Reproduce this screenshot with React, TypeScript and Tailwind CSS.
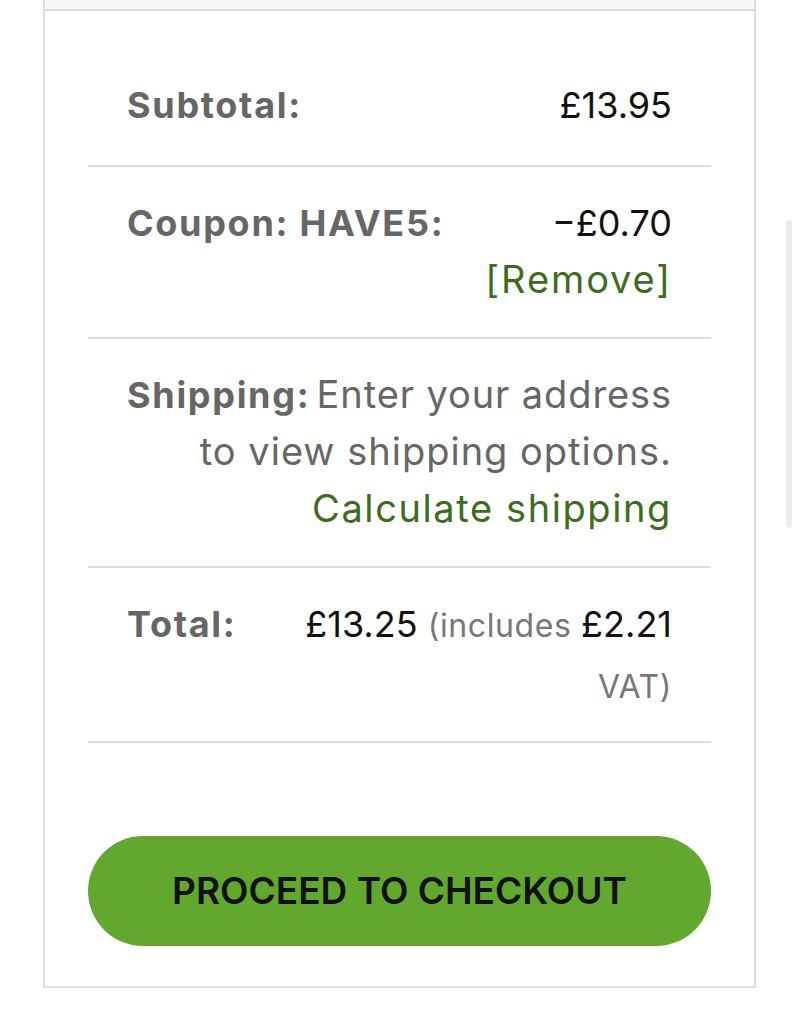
import React from "react";

function Row({ children, className = "" }: { children: React.ReactNode; className?: string }) {
  return (
    <div className={`border-b-2 border-[#dcdce2] px-[39px] text-right ${className}`}>
      {children}
    </div>
  );
}

function Label({ children }: { children: React.ReactNode }) {
  return (
    <span className="float-left text-[36px] font-bold tracking-[1.7px] text-[#666]">{children}</span>
  );
}

export default function App() {
  return (
    <div className="relative min-h-[1024px] bg-white font-['Inter',sans-serif] text-[36px] text-[#111]">
      <div className="ml-[43px] w-[713px] border-2 border-t-0 border-[#dcdce2]">
        <div className="h-[11px] border-b-2 border-[#dcdce2] bg-[#f8f8fb]" />
        <div className="px-[43px] pt-[38px]">
          <Row className="pb-[31px] pt-[28px] leading-[57px]">
            <Label>Subtotal:</Label>
            <span>£13.95</span>
          </Row>
          <Row className="py-[28px] leading-[57px]">
            <Label>Coupon: HAVE5:</Label>
            <span>−£0.70</span>
            <br />
            <span className="text-[38px] leading-none tracking-[1.9px] text-[#3d6b21]">[Remove]</span>
          </Row>
          <Row className="py-[28px] leading-[57px]">
            <Label>Shipping:</Label>
            <span className="whitespace-nowrap text-[38px] leading-none tracking-[0.9px] text-[#666]">
              Enter your address
            </span>
            <br />
            <span className="text-[38px] leading-none tracking-[1px] text-[#666]">to view shipping options.</span>
            <br />
            <span className="text-[38px] leading-none tracking-[1.6px] text-[#3d6b21]">Calculate shipping</span>
          </Row>
          <Row className="pb-[25px] pt-[26px] leading-[61px]">
            <Label>Total:</Label>
            <span>£13.25</span>{" "}
            <span className="text-[32px] leading-none tracking-[0.6px] text-[#777]">
              (includes <span className="text-[36px] leading-none tracking-normal text-[#111]">£2.21</span> VAT)
            </span>
          </Row>
          <div className="pb-[40px] pt-[93px]">
            <button className="flex h-[110px] w-full items-center justify-center rounded-full bg-[#62a82e] text-[37px] font-semibold text-[#111]">
              PROCEED TO CHECKOUT
            </button>
          </div>
        </div>
      </div>
      <div className="absolute right-[7px] top-[220px] h-[308px] w-[6px] rounded-full bg-[#ececec]" />
    </div>
  );
}
